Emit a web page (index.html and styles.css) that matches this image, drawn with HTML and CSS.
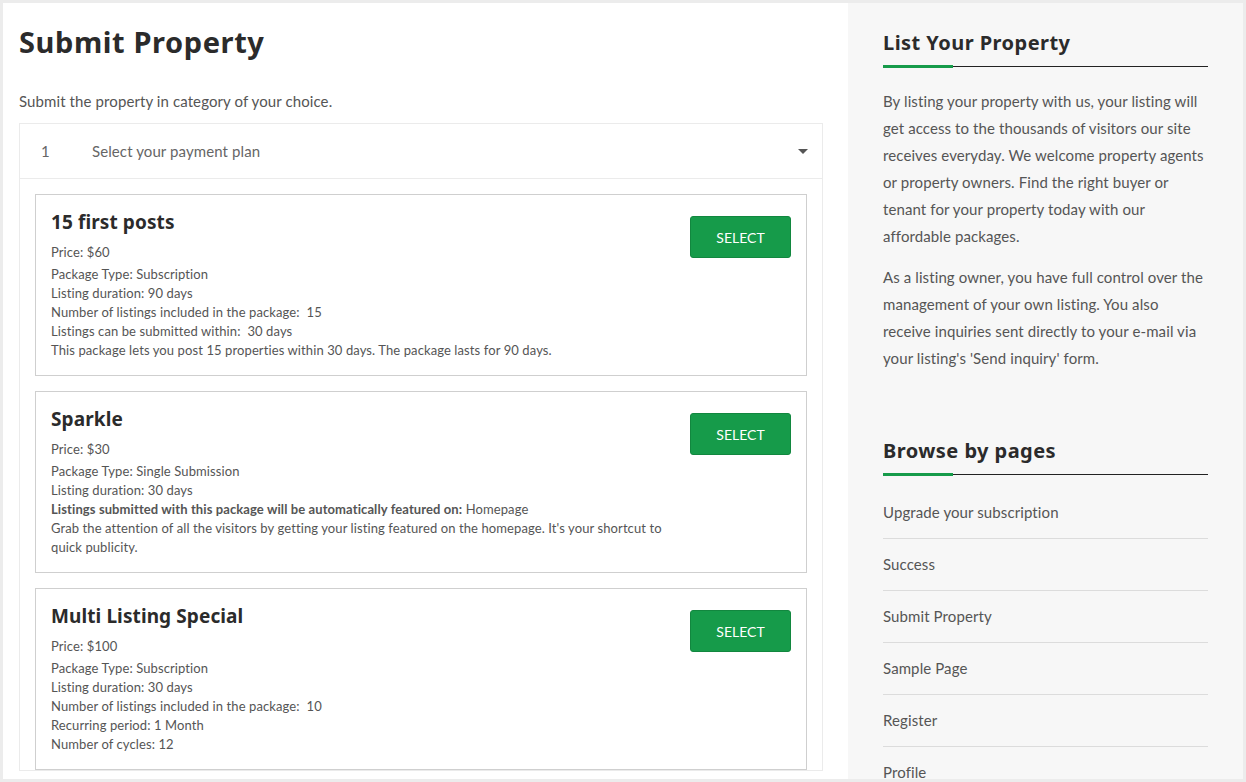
FILE: index.html
```html
<!DOCTYPE html>
<html lang="en">
  <head>
    <meta charset="UTF-8" />
    <meta name="viewport" content="width=device-width, initial-scale=1.0" />
    <title>Submit Property</title>
    <link rel="stylesheet" href="styles.css">
  </head>
  <body>
    <div class="page">
      <main class="content">
        <h1 class="page-title">Submit Property</h1>
        <p class="intro">Submit the property in category of your choice.</p>

        <div class="accordion">
          <div class="acc-head">
            <span class="step">1</span>
            <span class="acc-title">Select your payment plan</span>
            <span class="caret"></span>
          </div>
          <div class="acc-body">
            <div class="plan">
              <div class="plan-info">
                <h3>15 first posts</h3>
                <p class="price">Price: $60</p>
                <p>Package Type: Subscription</p>
                <p>Listing duration: 90 days</p>
                <p>Number of listings included in the package:&nbsp; 15</p>
                <p>Listings can be submitted within:&nbsp; 30 days</p>
                <p>This package lets you post 15 properties within 30 days. The package lasts for 90 days.</p>
              </div>
              <button class="btn">SELECT</button>
            </div>

            <div class="plan">
              <div class="plan-info">
                <h3>Sparkle</h3>
                <p class="price">Price: $30</p>
                <p>Package Type: Single Submission</p>
                <p>Listing duration: 30 days</p>
                <p><strong>Listings submitted with this package will be automatically featured on:</strong> Homepage</p>
                <p>Grab the attention of all the visitors by getting your listing featured on the homepage. It's your shortcut to quick publicity.</p>
              </div>
              <button class="btn">SELECT</button>
            </div>

            <div class="plan">
              <div class="plan-info">
                <h3>Multi Listing Special</h3>
                <p class="price">Price: $100</p>
                <p>Package Type: Subscription</p>
                <p>Listing duration: 30 days</p>
                <p>Number of listings included in the package:&nbsp; 10</p>
                <p>Recurring period: 1 Month</p>
                <p>Number of cycles: 12</p>
              </div>
              <button class="btn">SELECT</button>
            </div>
          </div>
        </div>
      </main>

      <aside class="sidebar">
        <section class="widget">
          <h2 class="widget-title">List Your Property</h2>
          <p>By listing your property with us, your listing will get access to the thousands of visitors our site receives everyday. We welcome property agents or property owners. Find the right buyer or tenant for your property today with our affordable packages.</p>
          <p>As a listing owner, you have full control over the management of your own listing. You also receive inquiries sent directly to your e-mail via your listing's 'Send inquiry' form.</p>
        </section>

        <section class="widget pages">
          <h2 class="widget-title">Browse by pages</h2>
          <ul>
            <li><a href="#">Upgrade your subscription</a></li>
            <li><a href="#">Success</a></li>
            <li><a href="#">Submit Property</a></li>
            <li><a href="#">Sample Page</a></li>
            <li><a href="#">Register</a></li>
            <li><a href="#">Profile</a></li>
          </ul>
        </section>
      </aside>
    </div>
  </body>
</html>
```

FILE: styles.css
```css
html,
body {
  margin: 0;
  height: 100%;
}

body {
  background-color: #ececec;
  font-family: Lato, "Noto Sans", sans-serif;
  color: #555;
  letter-spacing: 0.1px;
  overflow: hidden;
}

h1,
h2,
h3,
p {
  margin: 0;
}

.page {
  display: flex;
  margin: 3px 3px 0 3px;
  height: 776px;
  overflow: hidden;
}

.content {
  width: 845px;
  background-color: #fff;
  padding: 21px 25px 0 16px;
  box-sizing: border-box;
}

.page-title {
  font-family: "Noto Sans", sans-serif;
  font-size: 29px;
  font-weight: 700;
  letter-spacing: 0.6px;
  color: #2b2b2b;
  line-height: 36px;
}

.intro {
  font-size: 15px;
  margin-top: 32px;
  margin-bottom: 13px;
}

.accordion {
  border: 1px solid #ebebeb;
}

.acc-head {
  display: flex;
  align-items: center;
  height: 54px;
  padding: 0 14px 0 21px;
  border-bottom: 1px solid #ebebeb;
  font-size: 15px;
  color: #666;
}

.step {
  width: 51px;
}

.acc-title {
  flex: 1;
}

.caret {
  width: 0;
  height: 0;
  border-left: 5px solid transparent;
  border-right: 5px solid transparent;
  border-top: 5px solid #555;
}

.acc-body {
  padding: 15px 15px 0 15px;
  display: flex;
  flex-direction: column;
  gap: 15px;
}

.plan {
  display: flex;
  justify-content: space-between;
  align-items: flex-start;
  border: 1px solid #cfcfcf;
  padding: 15px 15px 15px 15px;
  min-height: 150px;
}

.plan-info {
  max-width: 630px;
}

.plan h3 {
  font-family: "Noto Sans", sans-serif;
  font-size: 19px;
  font-weight: 700;
  color: #2b2b2b;
  line-height: 24px;
  margin-bottom: 9px;
}

.plan p {
  font-size: 13px;
  line-height: 19px;
}

.plan p.price {
  margin-bottom: 3px;
}

.plan strong {
  font-weight: 700;
}

.btn {
  width: 101px;
  height: 42px;
  margin-top: 6px;
  background-color: #169b4a;
  border: 1px solid #12873f;
  border-radius: 3px;
  color: #fff;
  font-family: Lato, sans-serif;
  font-size: 14px;
  flex-shrink: 0;
}

.sidebar {
  flex: 1;
  background-color: #f7f7f7;
  padding: 27px 35px 0 35px;
}

.widget {
  margin-bottom: 66px;
}

.widget-title {
  font-family: "Noto Sans", sans-serif;
  font-size: 20px;
  font-weight: 700;
  letter-spacing: 0.45px;
  color: #2b2b2b;
  line-height: 26px;
  padding-bottom: 10px;
  border-bottom: 1px solid #222;
  position: relative;
  margin-bottom: 21px;
}

.widget-title::after {
  content: "";
  position: absolute;
  left: 0;
  bottom: -2px;
  width: 70px;
  height: 3px;
  background-color: #169b4a;
}

.widget p {
  font-size: 15px;
  line-height: 27px;
  margin-bottom: 14px;
}

.pages .widget-title {
  margin-bottom: 20px;
}

.pages ul {
  list-style: none;
  margin: -8px 0 0 0;
  padding: 0;
}

.pages li {
  border-bottom: 1px solid #dcdcdc;
  padding: 14px 0 15px 0;
  font-size: 15px;
  line-height: 22px;
}

.pages a {
  color: #555;
  text-decoration: none;
}
```
